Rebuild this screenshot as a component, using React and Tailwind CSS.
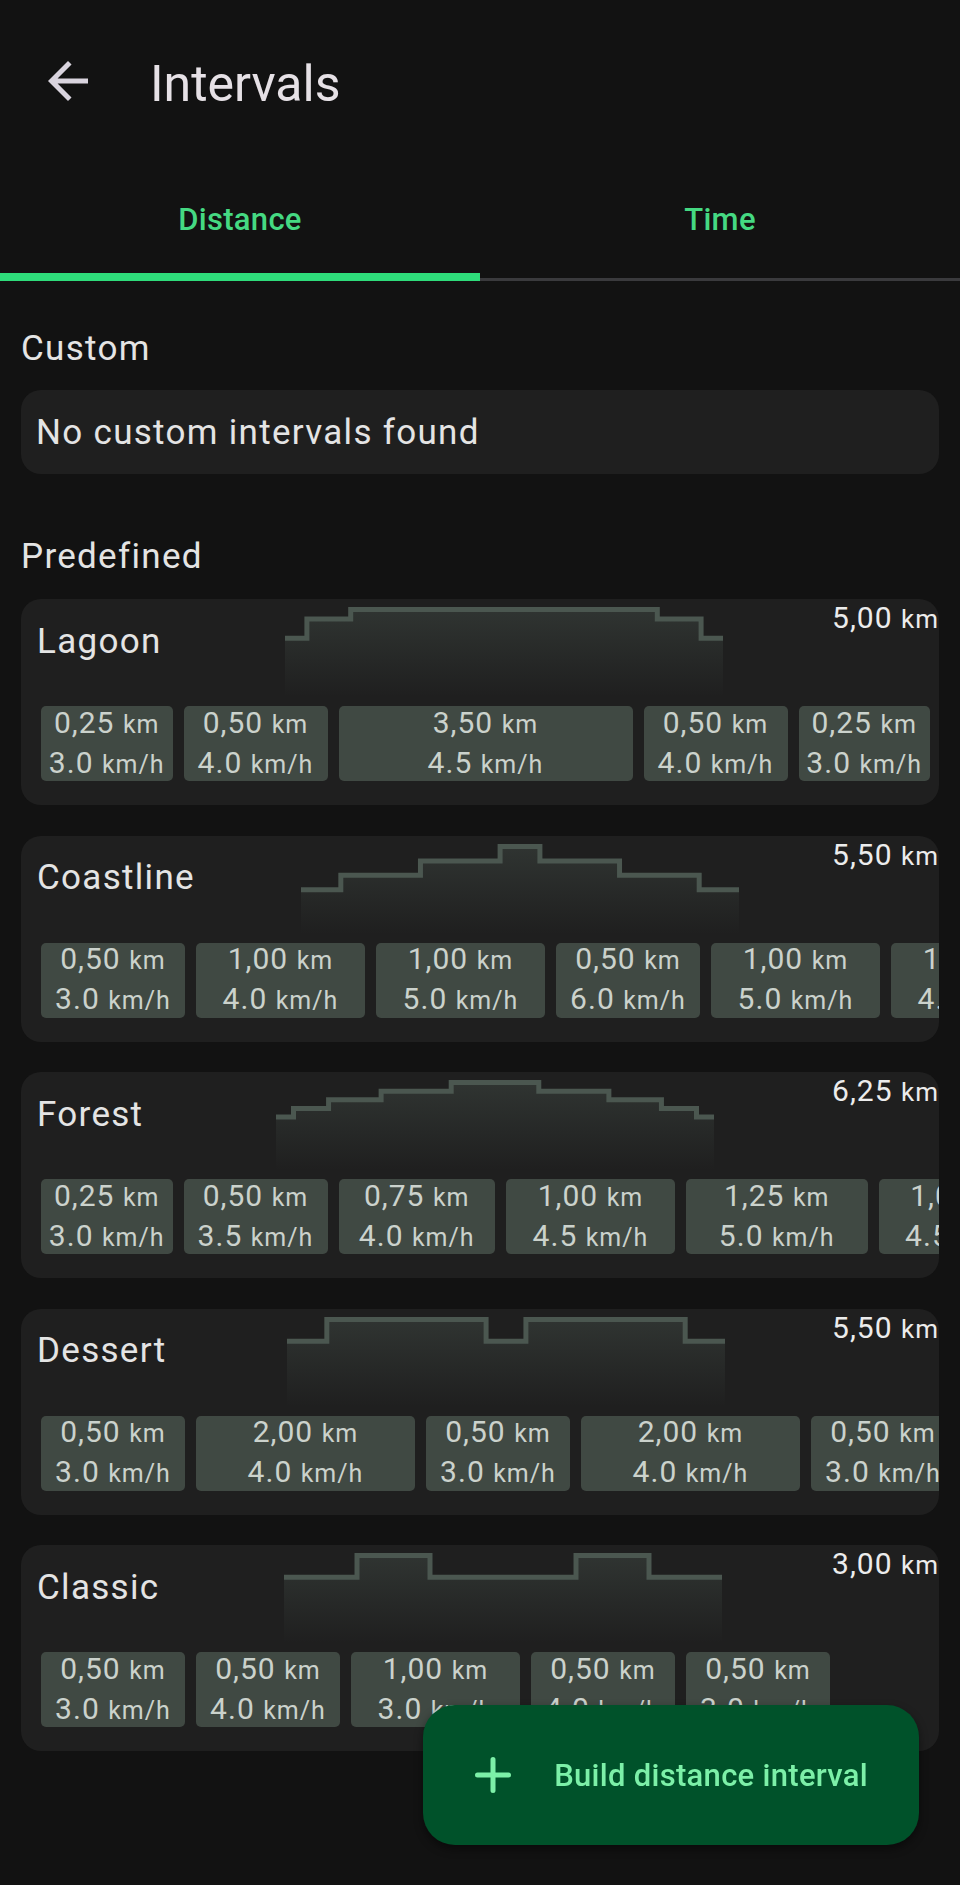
import React from 'react';

const PRESETS = [
    { name: 'Lagoon', parts: [[0.25, 3.0], [0.5, 4.0], [3.5, 4.5], [0.5, 4.0], [0.25, 3.0]] },
    { name: 'Coastline', parts: [[0.5, 3.0], [1.0, 4.0], [1.0, 5.0], [0.5, 6.0], [1.0, 5.0], [1.0, 4.0], [0.5, 3.0]] },
    { name: 'Forest', parts: [[0.25, 3.0], [0.5, 3.5], [0.75, 4.0], [1.0, 4.5], [1.25, 5.0], [1.0, 4.5], [0.75, 4.0], [0.5, 3.5], [0.25, 3.0]] },
    { name: 'Dessert', parts: [[0.5, 3.0], [2.0, 4.0], [0.5, 3.0], [2.0, 4.0], [0.5, 3.0]] },
    { name: 'Classic', parts: [[0.5, 3.0], [0.5, 4.0], [1.0, 3.0], [0.5, 4.0], [0.5, 3.0]] },
];

export default function App() {
    return (
        <div className="min-h-[1885px] w-full bg-[#121212] font-[Roboto,sans-serif] text-[#e4e4e4]">
            <div className="flex h-[165px] items-start">
                <svg className="ml-[38px] mt-[51px]" width="60" height="60" viewBox="0 0 24 24">
                    <path d="M20 11H7.83l5.59-5.59L12 4l-8 8 8 8 1.41-1.41L7.83 13H20v-2z" fill="#d9d4de" />
                </svg>
                <h1 className="ml-[52px] mt-[59px] text-[50px] leading-none text-[#e6e1e6]">Intervals</h1>
            </div>

            <div className="flex">
                <Tab label="Distance" active />
                <Tab label="Time" />
            </div>

            <div className="px-[21px] pb-[130px]">
                <h2 className="pt-[49.5px] text-[35px] leading-none tracking-[1.3px]">Custom</h2>
                <div className="mt-[24.5px] rounded-[20px] bg-[#1f1f1f] py-[24.5px] pl-[15px] text-[35px] leading-none tracking-[1.3px]">
                    No custom intervals found
                </div>

                <h2 className="mt-[64.5px] text-[35px] leading-none tracking-[1.3px]">Predefined</h2>
                <div className="mt-[25.5px] flex flex-col gap-[30.5px]">
                    {PRESETS.map(p => <PresetCard key={p.name} preset={p} />)}
                </div>
            </div>

            <button className="fixed bottom-[40px] right-[41px] flex h-[140px] items-center rounded-[32px] bg-[#00522a] pl-[52px] pr-[51px] shadow-[0_4px_10px_rgba(0,0,0,0.45)]">
                <svg width="36" height="36" viewBox="0 0 36 36">
                    <path d="M18 2.5v31M2.5 18h31" stroke="#7cf0a8" strokeWidth="5" strokeLinecap="round" />
                </svg>
                <span className="ml-[43px] text-[31px] font-medium leading-none tracking-[0.3px] text-[#7cf0a8]">Build distance interval</span>
            </button>
        </div>
    );
}

function Tab({ label, active }) {
    return (
        <div className="flex flex-1 flex-col">
            <div className="pt-[39px] pb-[38px] text-center text-[31px] font-medium leading-none tracking-[0.3px] text-[#45d982]">{label}</div>
            {active ? (
                <div className="h-[8px] bg-[#2edc7a]" />
            ) : (
                <div className="flex h-[8px] flex-col justify-end">
                    <div className="h-[3px] bg-[#3a3a3d]" />
                </div>
            )}
        </div>
    );
}

function PresetCard({ preset }) {
    const total = preset.parts.reduce((s, p) => s + p[0], 0);
    return (
        <div className="overflow-hidden rounded-[20px] bg-[#1f1f1f] pt-[4px] pb-[24px] pl-[16px]">
            <div className="flex h-[94px] items-start">
                <div className="mr-[14px] mt-[20.5px] text-[35px] leading-none tracking-[1.3px]">{preset.name}</div>
                <div className="mt-[4px] flex flex-1 justify-center">
                    <StepChart parts={preset.parts} id={preset.name} />
                </div>
                <div className="whitespace-nowrap text-[30px] leading-[30px] tracking-[1px] text-[#ececec]">
                    {fmtKm(total)} <span className="text-[26px]">km</span>
                </div>
            </div>
            <div className="ml-[4px] mt-[9px] flex gap-[11px]">
                {preset.parts.map(([km, speed], i) => (
                    <div
                        key={i}
                        className="flex h-[75px] shrink-0 flex-col items-center justify-center rounded-[5px] bg-[#404943] tracking-[1px] text-[#cbd2cc]"
                        style={{ width: 119 + 50 * km }}
                    >
                        <div className="whitespace-nowrap text-[30px] leading-[38px]">{fmtKm(km)} <span className="text-[25px]">km</span></div>
                        <div className="whitespace-nowrap text-[30px] leading-[38px]">{speed.toFixed(1)} <span className="text-[25px]">km/h</span></div>
                    </div>
                ))}
            </div>
        </div>
    );
}

// stepped speed profile, widths by distance, heights by speed
function StepChart({ parts, id }) {
    const W = 438;
    const H = 90;
    const total = parts.reduce((s, p) => s + p[0], 0);
    const max = Math.max(...parts.map(p => p[1]));
    let x = 0;
    let d = '';
    parts.forEach(([km, speed], i) => {
        const y = 89 - (speed / max) * 86.5;
        const w = (km / total) * W;
        d += (i === 0 ? `M0 ${y}` : ` L${x} ${y}`) + ` L${x + w} ${y}`;
        x += w;
    });
    const area = d + ` L${W} ${H} L0 ${H} Z`;
    return (
        <svg width={W} height={H} viewBox={`0 0 ${W} ${H}`}>
            <defs>
                <linearGradient id={`g-${id}`} x1="0" y1="0" x2="0" y2="1">
                    <stop offset="0" stopColor="#4b5750" stopOpacity="0.38" />
                    <stop offset="1" stopColor="#4b5750" stopOpacity="0" />
                </linearGradient>
            </defs>
            <path d={area} fill={`url(#g-${id})`} />
            <path d={d} fill="none" stroke="#4b5750" strokeWidth="5" />
        </svg>
    );
}

function fmtKm(v) {
    return v.toFixed(2).replace('.', ',');
}
